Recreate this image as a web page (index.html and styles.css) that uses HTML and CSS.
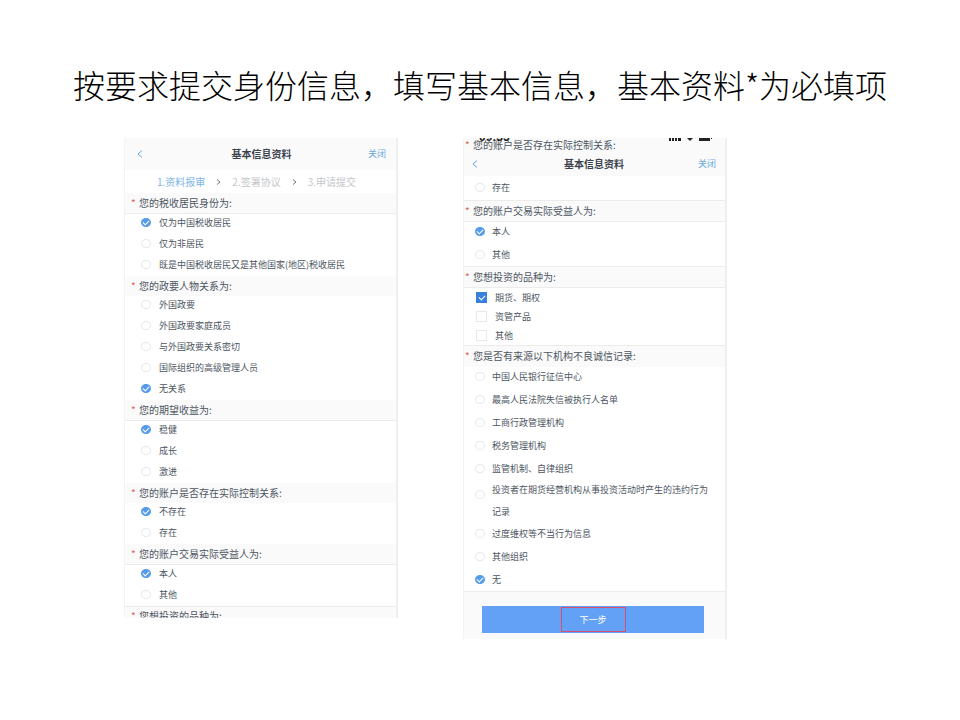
FILE: index.html
```html
<!DOCTYPE html>
<html lang="zh-CN">
<head>
    <meta charset="UTF-8">
    <meta name="viewport" content="width=device-width, initial-scale=1.0">
    <title>基本信息资料</title>
    <link rel="stylesheet" href="styles.css">
</head>
<body>
    <h1 class="title">按要求提交身份信息，填写基本信息，基本资料*为必填项</h1>
    <main class="screens">
        <form class="screen first">
            <div class="nav">
                <a class="back" href="#" aria-label="返回"><svg width="6" height="8" viewBox="0 0 6 8"><path d="M5 0.5L1 4l4 3.5"/></svg></a>
                <h2>基本信息资料</h2>
                <a href="#">关闭</a>
            </div>
            <div class="steps">
                <span class="current">1.资料报审</span>
                <svg width="5" height="6" viewBox="0 0 5 6"><path d="M1 0.5L4 3 1 5.5"/></svg>
                <span>2.签署协议</span>
                <svg width="5" height="6" viewBox="0 0 5 6"><path d="M1 0.5L4 3 1 5.5"/></svg>
                <span>3.申请提交</span>
            </div>
            <section>
                <h3 class="line">您的税收居民身份为:</h3>
                <div class="options">
                    <label><input type="radio" name="tax" checked>仅为中国税收居民</label>
                    <label><input type="radio" name="tax">仅为非居民</label>
                    <label><input type="radio" name="tax">既是中国税收居民又是其他国家(地区)税收居民</label>
                </div>
            </section>
            <section>
                <h3>您的政要人物关系为:</h3>
                <div class="options">
                    <label><input type="radio" name="politics">外国政要</label>
                    <label><input type="radio" name="politics">外国政要家庭成员</label>
                    <label><input type="radio" name="politics">与外国政要关系密切</label>
                    <label><input type="radio" name="politics">国际组织的高级管理人员</label>
                    <label><input type="radio" name="politics" checked>无关系</label>
                </div>
            </section>
            <section>
                <h3 class="line">您的期望收益为:</h3>
                <div class="options">
                    <label><input type="radio" name="profit" checked>稳健</label>
                    <label><input type="radio" name="profit">成长</label>
                    <label><input type="radio" name="profit">激进</label>
                </div>
            </section>
            <section>
                <h3>您的账户是否存在实际控制关系:</h3>
                <div class="options">
                    <label><input type="radio" name="control" checked>不存在</label>
                    <label><input type="radio" name="control">存在</label>
                </div>
            </section>
            <section>
                <h3 class="line">您的账户交易实际受益人为:</h3>
                <div class="options">
                    <label><input type="radio" name="owner" checked>本人</label>
                    <label><input type="radio" name="owner">其他</label>
                </div>
            </section>
            <section>
                <h3 class="top-line">您想投资的品种为:</h3>
            </section>
        </form>

        <form class="screen second">
            <div class="status">
                <span>09:35</span>
                <svg width="44" height="8" viewBox="0 0 44 8">
                    <path d="M0 4h2v4H0zM3 3h2v5H3zM6 1h2v7H6zM9 0h3v8H9z"/>
                    <path d="M17 4q4-4 8 0l-4 4z"/>
                    <path d="M30 1h11v7H30zM42 3h1v3h-1z"/>
                </svg>
            </div>
            <h3 class="scrolled">您的账户是否存在实际控制关系:</h3>
            <div class="nav">
                <a class="back" href="#" aria-label="返回"><svg width="6" height="8" viewBox="0 0 6 8"><path d="M5 0.5L1 4l4 3.5"/></svg></a>
                <h2>基本信息资料</h2>
                <a href="#">关闭</a>
            </div>
            <div class="options rest">
                <label><input type="radio" name="control2">存在</label>
            </div>
            <section>
                <h3 class="line top-line">您的账户交易实际受益人为:</h3>
                <div class="options">
                    <label><input type="radio" name="owner2" checked>本人</label>
                    <label><input type="radio" name="owner2">其他</label>
                </div>
            </section>
            <section>
                <h3 class="line top-line">您想投资的品种为:</h3>
                <div class="options checks">
                    <label><input type="checkbox" checked>期货、期权</label>
                    <label><input type="checkbox">资管产品</label>
                    <label><input type="checkbox">其他</label>
                </div>
            </section>
            <section>
                <h3 class="top-line">您是否有来源以下机构不良诚信记录:</h3>
                <div class="options">
                    <label><input type="radio" name="record">中国人民银行征信中心</label>
                    <label><input type="radio" name="record">最高人民法院失信被执行人名单</label>
                    <label><input type="radio" name="record">工商行政管理机构</label>
                    <label><input type="radio" name="record">税务管理机构</label>
                    <label><input type="radio" name="record">监管机制、自律组织</label>
                    <label class="long"><input type="radio" name="record">投资者在期货经营机构从事投资活动时产生的违约行为记录</label>
                    <label><input type="radio" name="record">过度维权等不当行为信息</label>
                    <label><input type="radio" name="record">其他组织</label>
                    <label><input type="radio" name="record" checked>无</label>
                </div>
            </section>
            <div class="footer">
                <button type="button"><span>下一步</span></button>
            </div>
        </form>
    </main>
</body>
</html>
```

FILE: styles.css
```css
* {
    box-sizing: border-box;
}
body {
    margin: 0;
    background: #fff;
    color: #4d5662;
    font-family: "Noto Sans CJK SC", sans-serif;
    font-size: 9px;
}
h1, h2, h3 {
    margin: 0;
}
.title {
    padding: 60px 0 30px;
    color: #000;
    font-size: 32px;
    line-height: 48px;
    font-weight: 300;
    text-align: center;
}
.screens {
    display: grid;
    grid-template-columns: 274fr 264fr;
    gap: 65px;
    align-items: start;
    padding: 0 233px 0 124px;
}
.screen {
    position: relative;
    overflow: hidden;
    border-left: 1px solid #f3f3f3;
    border-right: 2px solid #efefef;
}
.first {
    max-height: 480px;
}

/* top bar */
.nav {
    display: grid;
    grid-template-columns: 1fr auto 1fr;
    align-items: center;
    height: 32px;
    padding: 0 10px 0 12px;
    background: #fafafa;
}
.second .nav {
    height: 25px;
    padding: 0 9px 0 8px;
}
.nav h2 {
    color: #3a424d;
    font-size: 10px;
    line-height: 16px;
}
.nav a {
    color: #6aa8dc;
    line-height: 16px;
    text-align: right;
    text-decoration: none;
}
.nav .back {
    display: flex;
}
svg {
    fill: none;
    stroke: #6aa8dc;
}
.steps {
    display: flex;
    justify-content: center;
    align-items: center;
    gap: 11px;
    height: 23px;
    padding-right: 8px;
    color: #c4c7cb;
    font-size: 10px;
}
.steps .current {
    color: #7db5e5;
}
.steps svg {
    flex: none;
    stroke: #777;
}

/* questions */
h3 {
    height: 21px;
    padding-left: 6px;
    background: #fafafa;
    border: solid transparent;
    border-width: 0 0 1px;
    font-size: 10px;
    line-height: 20px;
    font-weight: 400;
    white-space: nowrap;
}
h3::before {
    content: "*";
    display: inline-block;
    width: 8px;
    color: #e0604f;
}
.second h3 {
    height: 22px;
    padding-left: 1px;
}
.line {
    border-bottom-color: #ececec;
}
.top-line {
    border-top: 1px solid #ececec;
}
.first section:nth-of-type(even) h3 {
    height: 20px;
    border-bottom: 0;
}
.first section:last-child h3 {
    height: 21px;
    line-height: 18px;
}
.options {
    display: flex;
    flex-direction: column;
    gap: 4px;
    padding: 0 12px 3px 16px;
}
.second .options {
    gap: 6px;
    padding: 1px 12px 3px 11px;
}
label {
    display: flex;
    align-items: center;
    gap: 8px;
    line-height: 17px;
}
.second label {
    gap: 7px;
}
input {
    appearance: none;
    flex: none;
    display: flex;
    justify-content: center;
    align-items: center;
    width: 10px;
    height: 9px;
    margin: 0;
    background: #fff;
    border: 1px solid #e8e8ea;
}
input[type="radio"] {
    border-radius: 50%;
}
input:checked {
    background: #559bea;
    border-color: #559bea;
}
input:checked::before {
    content: "";
    width: 5px;
    height: 3px;
    margin-bottom: 1px;
    border: solid #fff;
    border-width: 0 0 1px 1px;
    transform: rotate(-45deg);
}
.long {
    align-items: flex-start;
    margin: -4px 0;
    line-height: 22px;
}
.long input {
    margin-top: 11px;
}
.second .checks {
    gap: 0;
    padding: 0 12px;
}
.second .checks label {
    gap: 8px;
    line-height: 19px;
}
.checks input {
    width: 11px;
    height: 11px;
}
.checks input:checked {
    background: #3680db;
    border-color: #3680db;
}

/* second screen */
.status {
    position: absolute;
    top: -10px;
    left: 15px;
    right: 12px;
    display: flex;
    justify-content: space-between;
    align-items: center;
    color: #222;
    font-family: "Liberation Sans", sans-serif;
    font-size: 12px;
    line-height: 18px;
    font-weight: 700;
}
.status svg {
    fill: #222;
    stroke: none;
}
.second .scrolled {
    height: 13px;
    border: 0;
    line-height: 13px;
}
.second .rest {
    padding: 3px 12px 4px 11px;
}
.footer {
    padding: 14px 21px 6px 18px;
    background: #fafafa;
    border-top: 1px solid #ececec;
}
button {
    display: flex;
    justify-content: center;
    align-items: center;
    width: 100%;
    height: 27px;
    padding: 0;
    background: #62a1f5;
    border: 0;
    color: #fff;
    font: inherit;
}
button span {
    width: 65px;
    border: 1px solid #d4506c;
    line-height: 23px;
}
```
